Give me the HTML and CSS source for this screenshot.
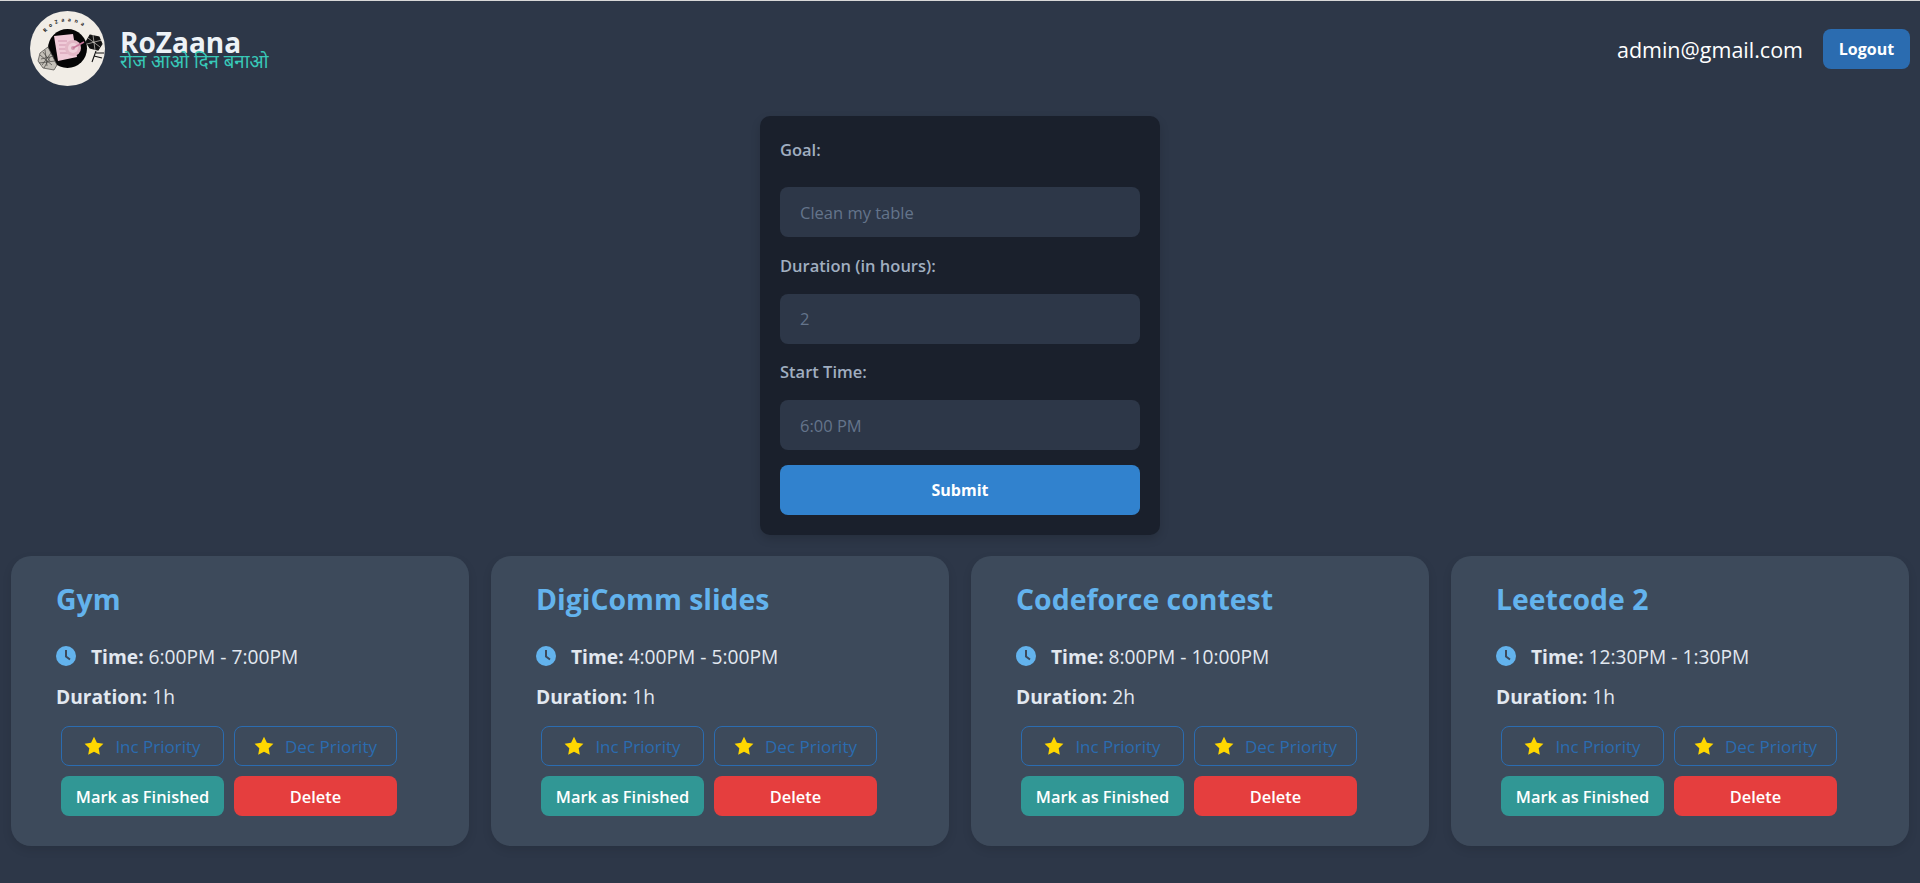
FILE: index.html
```html
<!DOCTYPE html>
<html lang="en">
<head>
  <meta charset="UTF-8" />
  <meta name="viewport" content="width=device-width, initial-scale=1.0"/>
  <title>RoZaana</title>
  <link rel="stylesheet" href="styles.css">
</head>
<body>

  <header class="main-header">
    <div class="brand">
      <svg class="logo" viewBox="0 0 75 75" width="75" height="75">
        <defs>
          <path id="logo-arc" d="M13 26 A27 27 0 0 1 62 26"/>
        </defs>
        <circle cx="37.5" cy="37.5" r="37.5" fill="#f1ede6"/>
        <text class="logo-text"><textPath href="#logo-arc" startOffset="5">RoZaana</textPath></text>
        <circle cx="37.5" cy="37.5" r="19.5" fill="#050505"/>
        <path d="M24 25 L43 23 L47 46 L28 50 Z" fill="#f0cbd8"/>
        <path d="M28 30h9M29 34h9M29 38h8M30 42h9" stroke="#c98aa6" stroke-width="0.8"/>
        <circle cx="43" cy="37" r="8" fill="#e3b7c6"/>
        <circle cx="43" cy="37" r="5" fill="#efd0da"/>
        <circle cx="43" cy="37" r="2" fill="#cf99ae"/>
        <path d="M43 37 L54 31" stroke="#c9779b" stroke-width="1.5"/>
        <path class="flower" d="M18 36 L10 42 L8 50 L13 57 L24 59 L27 54 L23 46 Z M10 44 L22 54 M15 39 L17 55 M9 52 L25 50 M21 42 L12 54 M13 41 L20 50 M11 48 L24 45 M14 57 L20 46"/>
        <path class="flower dark" d="M60 24 L69 26 L72 33 L68 39 L60 37 L56 31 Z M66 40 L62 51 M66 42 L74 42 M64 45 L72 47"/>
        <path class="petals" d="M58 27 L70 36 M63 24 L65 39 M57 33 L72 29"/>
      </svg>
      <div class="brand-text">
        <span class="brand-name">RoZaana</span>
        <span class="brand-tag">रोज आओ दिन बनाओ</span>
      </div>
    </div>
    <div class="user-box">
      <span class="user-email">admin@gmail.com</span>
      <button class="logout-btn">Logout</button>
    </div>
  </header>

  <form class="goal-form">
    <label class="form-label first" for="goal-input">Goal:</label>
    <input class="form-input" type="text" id="goal-input" placeholder="Clean my table" />
    <label class="form-label" for="duration-input">Duration (in hours):</label>
    <input class="form-input" type="text" id="duration-input" placeholder="2" />
    <label class="form-label" for="start-input">Start Time:</label>
    <input class="form-input" type="text" id="start-input" placeholder="6:00 PM" />
    <button class="submit-btn" type="button">Submit</button>
  </form>

  <section class="task-list">
    <article class="task-card">
      <h3 class="task-title">Gym</h3>
      <p class="task-line">
        <svg class="clock" viewBox="0 0 20 20" width="20" height="20"><circle cx="10" cy="10" r="10"/><path d="M10 4v6.5l4 3"/></svg>
        <span><b>Time:</b> 6:00PM - 7:00PM</span>
      </p>
      <p class="task-line"><span><b>Duration:</b> 1h</span></p>
      <div class="task-actions">
        <button class="btn btn-outline"><svg class="star" viewBox="0 0 20 20" width="20" height="20"><path d="M10 .8l2.9 6 6.5.9-4.7 4.6 1.1 6.5L10 15.7l-5.8 3.1 1.1-6.5L.6 7.7l6.5-.9z"/></svg>Inc Priority</button>
        <button class="btn btn-outline"><svg class="star" viewBox="0 0 20 20" width="20" height="20"><path d="M10 .8l2.9 6 6.5.9-4.7 4.6 1.1 6.5L10 15.7l-5.8 3.1 1.1-6.5L.6 7.7l6.5-.9z"/></svg>Dec Priority</button>
        <button class="btn btn-finish">Mark as Finished</button>
        <button class="btn btn-delete">Delete</button>
      </div>
    </article>

    <article class="task-card">
      <h3 class="task-title">DigiComm slides</h3>
      <p class="task-line">
        <svg class="clock" viewBox="0 0 20 20" width="20" height="20"><circle cx="10" cy="10" r="10"/><path d="M10 4v6.5l4 3"/></svg>
        <span><b>Time:</b> 4:00PM - 5:00PM</span>
      </p>
      <p class="task-line"><span><b>Duration:</b> 1h</span></p>
      <div class="task-actions">
        <button class="btn btn-outline"><svg class="star" viewBox="0 0 20 20" width="20" height="20"><path d="M10 .8l2.9 6 6.5.9-4.7 4.6 1.1 6.5L10 15.7l-5.8 3.1 1.1-6.5L.6 7.7l6.5-.9z"/></svg>Inc Priority</button>
        <button class="btn btn-outline"><svg class="star" viewBox="0 0 20 20" width="20" height="20"><path d="M10 .8l2.9 6 6.5.9-4.7 4.6 1.1 6.5L10 15.7l-5.8 3.1 1.1-6.5L.6 7.7l6.5-.9z"/></svg>Dec Priority</button>
        <button class="btn btn-finish">Mark as Finished</button>
        <button class="btn btn-delete">Delete</button>
      </div>
    </article>

    <article class="task-card">
      <h3 class="task-title">Codeforce contest</h3>
      <p class="task-line">
        <svg class="clock" viewBox="0 0 20 20" width="20" height="20"><circle cx="10" cy="10" r="10"/><path d="M10 4v6.5l4 3"/></svg>
        <span><b>Time:</b> 8:00PM - 10:00PM</span>
      </p>
      <p class="task-line"><span><b>Duration:</b> 2h</span></p>
      <div class="task-actions">
        <button class="btn btn-outline"><svg class="star" viewBox="0 0 20 20" width="20" height="20"><path d="M10 .8l2.9 6 6.5.9-4.7 4.6 1.1 6.5L10 15.7l-5.8 3.1 1.1-6.5L.6 7.7l6.5-.9z"/></svg>Inc Priority</button>
        <button class="btn btn-outline"><svg class="star" viewBox="0 0 20 20" width="20" height="20"><path d="M10 .8l2.9 6 6.5.9-4.7 4.6 1.1 6.5L10 15.7l-5.8 3.1 1.1-6.5L.6 7.7l6.5-.9z"/></svg>Dec Priority</button>
        <button class="btn btn-finish">Mark as Finished</button>
        <button class="btn btn-delete">Delete</button>
      </div>
    </article>

    <article class="task-card">
      <h3 class="task-title">Leetcode 2</h3>
      <p class="task-line">
        <svg class="clock" viewBox="0 0 20 20" width="20" height="20"><circle cx="10" cy="10" r="10"/><path d="M10 4v6.5l4 3"/></svg>
        <span><b>Time:</b> 12:30PM - 1:30PM</span>
      </p>
      <p class="task-line"><span><b>Duration:</b> 1h</span></p>
      <div class="task-actions">
        <button class="btn btn-outline"><svg class="star" viewBox="0 0 20 20" width="20" height="20"><path d="M10 .8l2.9 6 6.5.9-4.7 4.6 1.1 6.5L10 15.7l-5.8 3.1 1.1-6.5L.6 7.7l6.5-.9z"/></svg>Inc Priority</button>
        <button class="btn btn-outline"><svg class="star" viewBox="0 0 20 20" width="20" height="20"><path d="M10 .8l2.9 6 6.5.9-4.7 4.6 1.1 6.5L10 15.7l-5.8 3.1 1.1-6.5L.6 7.7l6.5-.9z"/></svg>Dec Priority</button>
        <button class="btn btn-finish">Mark as Finished</button>
        <button class="btn btn-delete">Delete</button>
      </div>
    </article>
  </section>

</body>
</html>
```

FILE: styles.css
```css
body, html {
  margin: 0;
  padding: 0;
  background: #2d3748;
  color: white;
  font-family: "Open Sans", "Noto Sans", sans-serif;
}

body {
  border-top: 1px solid #d8d8d8;
  height: 882px;
  overflow: hidden;
}

.main-header {
  display: flex;
  align-items: center;
  justify-content: space-between;
  height: 96px;
  padding: 0 10px 0 30px;
}

.brand {
  display: flex;
  align-items: center;
  gap: 15px;
}

.logo {
  margin-top: -2px;
}

.logo-text {
  font-size: 5px;
  font-weight: 700;
  letter-spacing: 3.4px;
  fill: #222;
}

.flower {
  fill: #c4c0b8;
  stroke: #44423f;
  stroke-width: 0.7;
}

.flower.dark {
  fill: #111;
  stroke: #111;
  stroke-width: 1.1;
}

.petals {
  fill: none;
  stroke: #f1ede6;
  stroke-width: 0.6;
}

.brand-text {
  display: flex;
  flex-direction: column;
}

.brand-name {
  font-size: 28px;
  font-weight: 700;
  line-height: 26px;
  color: #edf2f7;
}

.brand-tag {
  font-size: 18.6px;
  line-height: 18px;
  margin-top: -3px;
  color: #38c9b8;
}

.user-box {
  display: flex;
  align-items: center;
  gap: 20px;
}

.user-email {
  font-size: 21.5px;
}

.logout-btn {
  width: 87px;
  height: 40px;
  border: none;
  border-radius: 8px;
  background: #2b6cb0;
  color: white;
  font-family: inherit;
  font-size: 16px;
  font-weight: 700;
}

.goal-form {
  display: flex;
  flex-direction: column;
  box-sizing: border-box;
  width: 400px;
  height: 419px;
  margin: 19px auto 21px;
  padding: 20px;
  border-radius: 10px;
  background: #1a202c;
  box-shadow: 0 4px 10px rgba(0, 0, 0, 0.15);
}

.form-label {
  font-size: 16.5px;
  font-weight: 600;
  line-height: 24px;
  margin-bottom: 16px;
  color: #a0aec0;
}

.form-label.first {
  margin-top: 2px;
  margin-bottom: 25px;
}

.form-input {
  box-sizing: border-box;
  flex: none;
  height: 50px;
  margin-bottom: 16.5px;
  padding: 0 20px;
  border: none;
  border-radius: 8px;
  background: #2d3748;
  color: white;
  font-family: inherit;
  font-size: 16.5px;
}

.form-input::placeholder {
  color: #64748b;
}

.submit-btn {
  height: 50px;
  margin-top: -2px;
  border: none;
  border-radius: 8px;
  background: #3182ce;
  color: white;
  font-family: inherit;
  font-size: 16px;
  font-weight: 700;
}

.task-list {
  display: grid;
  grid-template-columns: repeat(4, 1fr);
}

.task-card {
  box-sizing: border-box;
  height: 290px;
  margin: 0 11px;
  padding: 25px 45px 30px;
  border-radius: 20px;
  background: #3d4a5b;
  box-shadow: 0 4px 10px rgba(0, 0, 0, 0.1);
}

.task-title {
  margin: 0 0 26px;
  font-size: 28.4px;
  line-height: 36px;
  font-weight: 700;
  color: #63b3ed;
}

.task-line {
  display: flex;
  align-items: center;
  gap: 15px;
  height: 26px;
  margin: 0 0 14px;
  font-size: 19.2px;
  color: #e2e8f0;
}

.clock {
  flex: none;
  fill: #63b3ed;
}

.clock path {
  fill: none;
  stroke: #3d4a5b;
  stroke-width: 2;
}

.task-actions {
  display: grid;
  grid-template-columns: 163px 163px;
  gap: 10px;
  margin: 17px 0 0 5px;
}

.btn {
  display: flex;
  align-items: center;
  justify-content: center;
  gap: 11px;
  height: 40px;
  padding: 0;
  border: none;
  border-radius: 8px;
  color: white;
  font-family: inherit;
  font-size: 16.4px;
  font-weight: 600;
}

.btn-outline {
  border: 1px solid #2b6cb0;
  background: transparent;
  color: #2b6cb0;
  font-size: 17px;
  font-weight: 500;
}

.star {
  fill: #ffd700;
}

.btn-finish {
  background: #319795;
}

.btn-delete {
  background: #e53e3e;
}
```
